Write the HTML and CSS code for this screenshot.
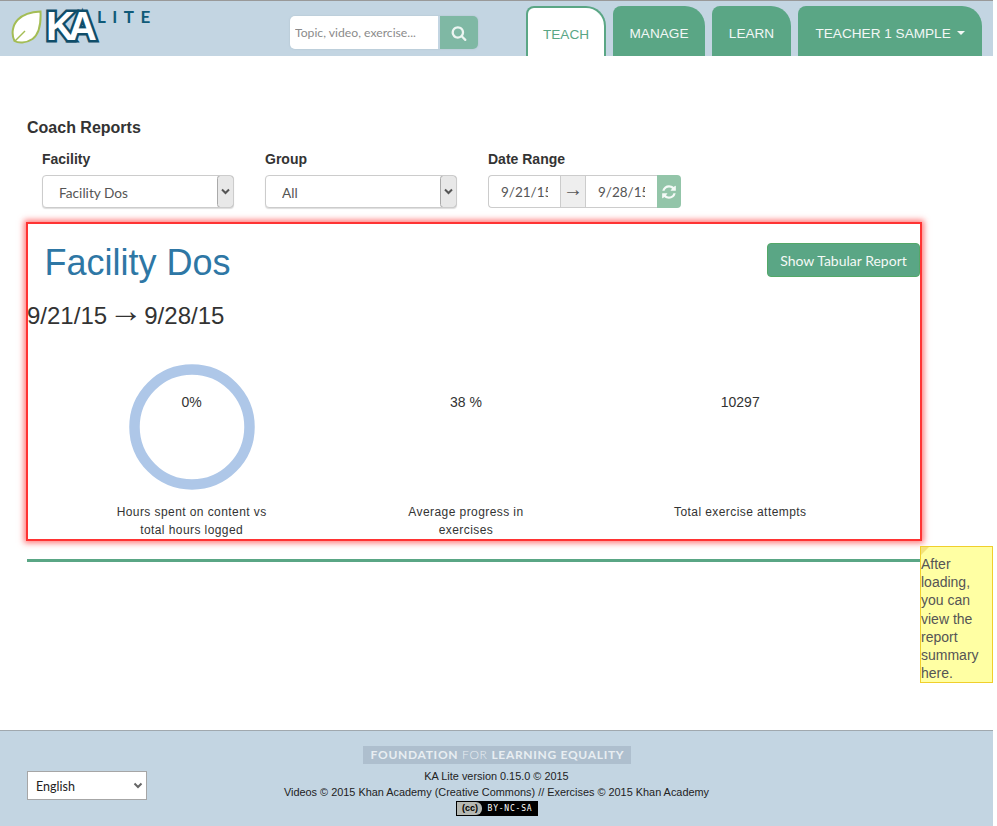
FILE: index.html
```html
<!DOCTYPE html>
<html lang="en">
  <head>
    <meta charset="UTF-8" />
    <title>Coach Reports | KA Lite</title>
    <link rel="stylesheet" href="styles.css">
  </head>
  <body>
    <div class="page">
      <header class="topbar">
        <a class="logo">
          <svg class="leaf" viewBox="0 0 31 34" width="31" height="34">
            <path d="M29.5 1.5 C30 12 28.5 24 21.5 29 C15 33.5 7 33 3.5 31 C0 24 1.5 15 7 9.5 C12.5 4 21 2 29.5 1.5 Z" fill="#fff" stroke="#a4bd55" stroke-width="2"/>
            <path d="M4 31 L14 21" fill="none" stroke="#a4bd55" stroke-width="1.5"/>
          </svg>
          <span class="logo-ka">KA</span>
          <span class="logo-lite">LITE</span>
        </a>
        <form class="search">
          <input class="search-input" type="text" placeholder="Topic, video, exercise..." />
          <button class="search-btn" type="button">
            <svg viewBox="0 0 1792 1792" width="16" height="16"><path fill="#fff" fill-opacity="0.85" d="M1216 832q0-185-131.5-316.5t-316.5-131.5-316.5 131.5-131.5 316.5 131.5 316.5 316.5 131.5 316.5-131.5 131.5-316.5zm512 832q0 52-38 90t-90 38q-54 0-90-38l-343-342q-179 124-399 124-143 0-273.5-55.5t-225-150-150-225-55.5-273.5 55.5-273.5 150-225 225-150 273.5-55.5 273.5 55.5 225 150 150 225 55.5 273.5q0 220-124 399l343 343q37 37 37 90z"/></svg>
          </button>
        </form>
        <nav class="tabs">
          <a class="tab tab-active tab-teach">Teach</a>
          <a class="tab tab-manage">Manage</a>
          <a class="tab tab-learn">Learn</a>
          <a class="tab tab-user">Teacher 1 Sample <span class="caret"></span></a>
        </nav>
      </header>

      <main class="content">
        <h1 class="page-title">Coach Reports</h1>
        <div class="filters">
          <div class="filter">
            <label class="filter-label">Facility</label>
            <select class="filter-select"><option>Facility Dos</option></select>
          </div>
          <div class="filter">
            <label class="filter-label">Group</label>
            <select class="filter-select"><option>All</option></select>
          </div>
          <div class="filter">
            <label class="filter-label">Date Range</label>
            <div class="date-range">
              <input class="date-input date-first" type="text" value="9/21/15" />
              <span class="date-arrow">&rarr;</span>
              <input class="date-input date-last" type="text" value="9/28/15" />
              <button class="date-refresh" type="button">
                <svg viewBox="0 0 1792 1792" width="16" height="16"><path fill="#fff" fill-opacity="0.9" d="M1639 1056q0 5-1 7-64 268-268 434.5t-478 166.5q-146 0-282.5-55t-243.5-157l-129 129q-19 19-45 19t-45-19-19-45v-448q0-26 19-45t45-19h448q26 0 45 19t19 45-19 45l-137 137q71 66 161 102t187 36q134 0 250-65t186-179q11-17 53-117 8-23 30-23h192q13 0 22.5 9.5t9.5 22.5zm25-800v448q0 26-19 45t-45 19h-448q-26 0-45-19t-19-45 19-45l138-138q-148-137-349-137-134 0-250 65t-186 179q-11 17-53 117-8 23-30 23h-199q-13 0-22.5-9.5t-9.5-22.5v-7q65-268 270-434.5t480-166.5q146 0 284 55.5t245 156.5l130-129q19-19 45-19t45 19 19 45z"/></svg>
              </button>
            </div>
          </div>
        </div>

        <section class="report">
          <div class="report-head">
            <h2 class="report-title">Facility Dos</h2>
            <button class="report-btn" type="button">Show Tabular Report</button>
          </div>
          <h3 class="report-dates">9/21/15<span class="dates-arrow">&rarr;</span>9/28/15</h3>
          <div class="stats">
            <div class="stat">
              <div class="stat-chart">
                <svg class="ring" viewBox="0 0 128 128" width="128" height="128">
                  <circle cx="64" cy="63" r="57.5" fill="none" stroke="#aec7e8" stroke-width="10.5"/>
                </svg>
                <span class="stat-value">0%</span>
              </div>
              <p class="stat-label">Hours spent on content vs total hours logged</p>
            </div>
            <div class="stat">
              <div class="stat-chart"><span class="stat-value">38 %</span></div>
              <p class="stat-label">Average progress in exercises</p>
            </div>
            <div class="stat">
              <div class="stat-chart"><span class="stat-value">10297</span></div>
              <p class="stat-label">Total exercise attempts</p>
            </div>
          </div>
        </section>

        <hr class="rule" />

        <div class="note">
          <span class="note-corner"></span>
          After loading, you can view the report summary here.
        </div>
      </main>

      <footer class="footer">
        <select class="lang"><option>English</option></select>
        <div class="credits">
          <div class="fle"><b>FOUNDATION</b> <span>FOR</span> <b>LEARNING EQUALITY</b></div>
          <p class="credit-line">KA Lite version 0.15.0 &copy; 2015</p>
          <p class="credit-line">Videos &copy; 2015 Khan Academy (Creative Commons) // Exercises &copy; 2015 Khan Academy</p>
          <span class="cc"><span class="cc-mark">(cc)</span><span class="cc-text">BY-NC-SA</span></span>
        </div>
      </footer>
    </div>
  </body>
</html>
```

FILE: styles.css
```css
html,
body {
  margin: 0;
  padding: 0;
  background: #fff;
}
body {
  font: 14px "Liberation Sans", Arial, sans-serif;
  color: #333;
}
.page {
  width: 993px;
  height: 826px;
  display: flex;
  flex-direction: column;
  overflow: hidden;
}

/* top bar */
.topbar {
  height: 55px;
  flex: none;
  display: flex;
  background-color: #c3d5e2;
  border-top: 1px solid #999;
}
.logo {
  width: 290px;
  flex: none;
  display: flex;
  align-items: flex-start;
  padding-left: 11px;
  box-sizing: border-box;
}
.leaf {
  margin-top: 9px;
  flex: none;
}
.logo-ka {
  width: 51px;
  flex: none;
  font: bold 40px/1 "Liberation Sans", Arial, sans-serif;
  letter-spacing: -7px;
  margin: 5px 0 0 4px;
  color: #fff;
  -webkit-text-stroke: 5px #0f4d69;
  paint-order: stroke fill;
}
.logo-lite {
  font: bold 17px/1 "Lato", sans-serif;
  letter-spacing: 6.5px;
  margin: 7px 0 0 0;
  color: #0f5a78;
}
.search {
  display: flex;
  margin: 15px 0 0;
  height: 33px;
  border-radius: 5px;
  box-shadow: 0 0 2px #aebfca;
  width: 188px;
  flex: none;
}
.search-input {
  width: 148px;
  margin-right: 2px;
  box-sizing: border-box;
  border: none;
  padding: 0 5px;
  font: 12.2px "Lato", sans-serif;
  background: #fff;
  border-radius: 5px 0 0 5px;
  outline: none;
}
.search-input::placeholder {
  color: #8b8b8b;
  opacity: 1;
}
.search-btn {
  width: 38px;
  border: none;
  padding: 0;
  background: #7fb8a4;
  border-radius: 0 5px 5px 0;
  display: flex;
  align-items: center;
  justify-content: center;
}
.tabs {
  display: flex;
  gap: 7px;
  margin: 5px 0 0 48px;
}
.tab {
  display: flex;
  align-items: center;
  justify-content: center;
  box-sizing: border-box;
  height: 50px;
  padding-top: 4px;
  background: #5aa685;
  color: #f2f7f5;
  font-size: 13.6px;
  text-transform: uppercase;
  border-radius: 8px 20px 0 0;
}
.tab-teach {
  width: 80px;
}
.tab-manage {
  width: 92px;
}
.tab-learn {
  width: 79px;
}
.tab-user {
  width: 184px;
  white-space: pre;
}
.tab-active {
  background: #fff;
  color: #5aa685;
  border: 2px solid #5aa685;
  border-bottom: none;
}
.caret {
  display: inline-block;
  margin-left: 2px;
  border-top: 4px solid #f2f7f5;
  border-left: 4px solid transparent;
  border-right: 4px solid transparent;
}

/* report area */
.content {
  flex: 1;
  position: relative;
  padding: 0 0 0 27px;
  min-height: 0;
}
.page-title {
  margin: 63px 0 0;
  font-size: 16px;
  line-height: 18px;
  font-weight: bold;
}
.filters {
  display: flex;
  gap: 31px;
  margin: 14px 0 0 15px;
}
.filter {
  display: flex;
  flex-direction: column;
}
.filter-label {
  font-weight: bold;
  font-size: 14px;
  line-height: 16px;
  margin-bottom: 8px;
}
.filter-select {
  appearance: none;
  -webkit-appearance: none;
  width: 192px;
  height: 33px;
  box-sizing: border-box;
  padding: 2px 0 0 16px;
  font: 13.7px "Lato", sans-serif;
  color: #555;
  border: 1px solid #ccc;
  border-radius: 4px;
  box-shadow: 0 1px 1px #ddd;
  background-color: #fff;
  background-image: url("data:image/svg+xml,%3Csvg xmlns='http://www.w3.org/2000/svg' width='17' height='33'%3E%3Crect x='0.5' y='0.5' width='16' height='32' rx='3' fill='%23e8e8e8' stroke='%23aaa'/%3E%3Cpath d='M5 14.5 8.5 18l3.5-3.5' fill='none' stroke='%23555' stroke-width='2'/%3E%3C/svg%3E");
  background-repeat: no-repeat;
  background-origin: border-box;
  background-clip: border-box;
  background-position: right center;
}
.date-range {
  display: flex;
  width: 193px;
  height: 33px;
}
.date-input {
  width: 72px;
  flex: none;
  box-sizing: border-box;
  padding: 1px 12px 0;
  border: 1px solid #ccc;
  font: 13.5px "Lato", sans-serif;
  color: #555;
  background: #fff;
  outline: none;
}
.date-first {
  border-radius: 4px 0 0 4px;
  border-right: none;
}
.date-last {
  border-right: none;
}
.date-arrow {
  width: 25px;
  flex: none;
  box-sizing: border-box;
  display: flex;
  align-items: center;
  justify-content: center;
  padding-bottom: 5px;
  background: #eee;
  border: 1px solid #ccc;
  border-right: none;
  color: #555;
  font: 20px "Liberation Sans", sans-serif;
}
.date-refresh {
  width: 24px;
  flex: none;
  border: none;
  padding: 0;
  background: #93c5a9;
  border-radius: 0 4px 4px 0;
  display: flex;
  align-items: center;
  justify-content: center;
}
.report {
  width: 896px;
  height: 319px;
  margin: 14px 0 0 -1px;
  box-sizing: border-box;
  border: 2px solid #f33;
  box-shadow: 0 0 6px 2px rgba(255, 30, 30, 0.6);
  display: flex;
  flex-direction: column;
}
.report-head {
  display: flex;
  justify-content: space-between;
  align-items: flex-start;
  padding-left: 16.5px;
  margin-top: 19px;
}
.report-title {
  margin: 0;
  font-size: 36px;
  line-height: 40px;
  font-weight: normal;
  color: #2e77a5;
}
.report-btn {
  width: 153px;
  height: 34px;
  padding: 0;
  font: 14px "Lato", sans-serif;
  color: #f4f9f6;
  background: #5aa685;
  border: 1px solid #53a868;
  border-radius: 4px;
}
.report-dates {
  margin: 18px 0 0 -1px;
  font-size: 24px;
  line-height: 30px;
  font-weight: normal;
}
.dates-arrow {
  font: 34px/0 "Liberation Sans", sans-serif;
  margin: 0 1.6px;
  vertical-align: 2px;
}
.stats {
  display: flex;
  margin-top: 33px;
  padding-left: 26.5px;
}
.stat {
  width: 274.3px;
  flex: none;
  text-align: center;
}
.stat-chart {
  height: 134px;
  position: relative;
  display: flex;
  flex-direction: column;
  align-items: center;
}
.stat-value {
  margin-top: 30px;
  font-size: 14px;
  line-height: 16px;
  position: relative;
}
.ring {
  position: absolute;
  top: 0;
  left: 73px;
}
.stat-label {
  width: 160px;
  margin: 5px auto 0;
  font-size: 12px;
  line-height: 18px;
  letter-spacing: 0.42px;
}
.rule {
  width: 893px;
  height: 3px;
  margin: 18px 0 0;
  border: none;
  background: #5aa685;
}

/* tooltip note */
.note {
  position: absolute;
  left: 920px;
  top: 490px;
  width: 73px;
  height: 137px;
  box-sizing: border-box;
  padding-top: 8px;
  border: 1px solid #f0cf2c;
  background: #ffffa3;
  font-size: 14px;
  line-height: 1.3;
  color: #555;
}
.note-corner {
  position: absolute;
  left: 0;
  top: 0;
  border-top: 8px solid #f3e27a;
  border-right: 8px solid transparent;
}

/* footer */
.footer {
  height: 95px;
  flex: none;
  position: relative;
  display: flex;
  justify-content: center;
  background: #c3d5e2;
  border-top: 1px solid #a0a8ae;
}
.lang {
  appearance: none;
  -webkit-appearance: none;
  position: absolute;
  left: 27px;
  top: 40px;
  width: 120px;
  height: 29px;
  box-sizing: border-box;
  padding: 1px 0 0 8px;
  font: 12.5px "Lato", sans-serif;
  color: #222;
  border: 1px solid #a6a6a6;
  background-color: #fff;
  background-image: url("data:image/svg+xml,%3Csvg xmlns='http://www.w3.org/2000/svg' width='10' height='8'%3E%3Cpath d='M1.5 1.5 5 5l3.5-3.5' fill='none' stroke='%23666' stroke-width='2'/%3E%3C/svg%3E");
  background-repeat: no-repeat;
  background-position: right 3px center;
}
.credits {
  display: flex;
  flex-direction: column;
  align-items: center;
  padding-top: 15px;
}
.fle {
  width: 268px;
  height: 18px;
  margin-left: 2px;
  background: #aebfce;
  color: #e8eef2;
  font: 12px/18px "Lato", sans-serif;
  letter-spacing: 0.7px;
  text-align: center;
  white-space: nowrap;
}
.fle span {
  font-weight: 300;
}
.credit-line {
  margin: 0;
  font-size: 10.9px;
  line-height: 16px;
  color: #222;
}
.fle + .credit-line {
  margin-top: 4px;
}
.cc {
  display: flex;
  width: 82px;
  height: 15px;
  box-sizing: border-box;
  border: 1px solid #000;
  background: #000;
  color: #fff;
  margin: 1px 0 0 2px;
}
.cc-mark {
  width: 25px;
  background: #b5b8b2;
  color: #000;
  font: bold 9px/13px "Liberation Sans", sans-serif;
  text-align: center;
  border-radius: 0 6px 6px 0;
}
.cc-text {
  flex: 1;
  font: 8px/13px "DejaVu Sans Mono", monospace;
  letter-spacing: 0.8px;
  text-align: center;
}
```
